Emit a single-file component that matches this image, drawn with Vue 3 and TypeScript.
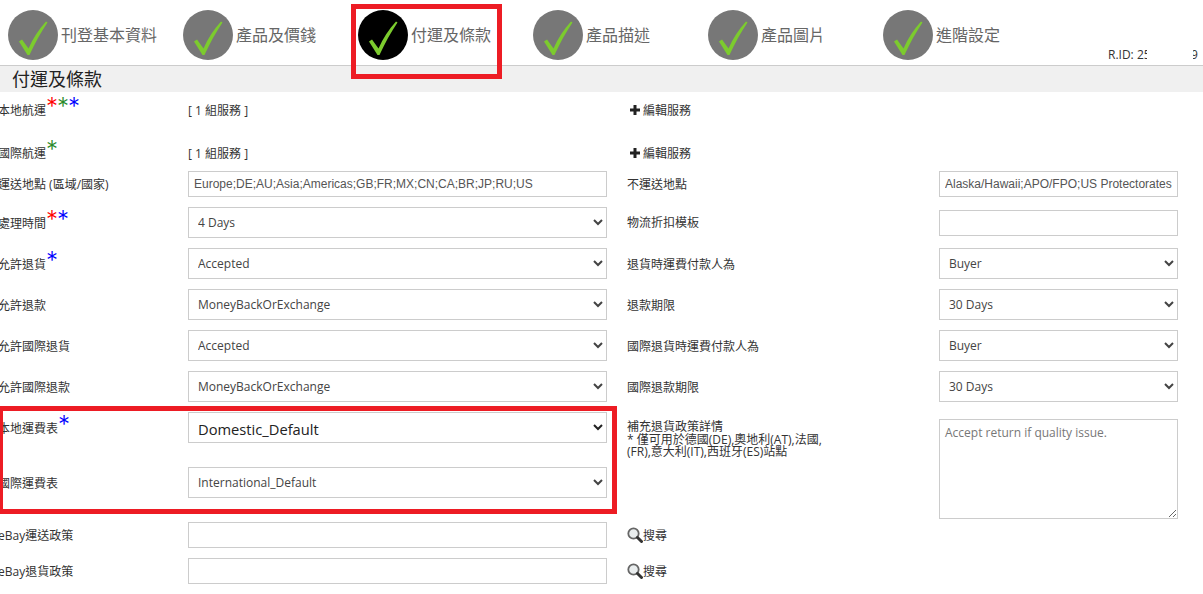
<script setup lang="ts">
interface Step { label: string; active?: boolean }
const steps: Step[] = [
  { label: '刊登基本資料' },
  { label: '產品及價錢' },
  { label: '付運及條款', active: true },
  { label: '產品描述' },
  { label: '產品圖片' },
  { label: '進階設定' },
]
</script>

<template>
  <div class="page">
    <header class="steps">
      <div v-for="s in steps" :key="s.label" class="step">
        <span class="disc" :class="{ on: s.active }">
          <svg viewBox="0 0 50 50" width="50" height="50" aria-hidden="true">
            <path d="M11 31.5 L14 29.500 L20.500 38.500 C25 28 31 19 38 11.500 L39.500 12.500 C33 22 27 33 21.500 45 L19.500 45 Z" fill="#7ccb2e" />
          </svg>
        </span>
        <span class="step-text">{{ s.label }}</span>
      </div>
      <div class="rid"><span class="rid-a">R.ID: 25</span><span class="rid-b">9</span></div>
    </header>

    <h2 class="band">付運及條款</h2>

    <form class="form" @submit.prevent>
      <!-- row 1 -->
      <div class="lab h36">本地航運<i class="st r">*</i><i class="st g">*</i><i class="st b">*</i></div>
      <div class="val h36">[ 1 組服務 ]</div>
      <div class="lab2 h36"><svg class="plus" viewBox="0 0 10 10"><path d="M3.5 0h3v3.5H10v3H6.500V10h-3V6.500H0v-3h3.500z" /></svg>編輯服務</div>
      <div></div>

      <!-- row 2 -->
      <div class="lab h37">國際航運<i class="st g">*</i></div>
      <div class="val h37">[ 1 組服務 ]</div>
      <div class="lab2 h37"><svg class="plus" viewBox="0 0 10 10"><path d="M3.5 0h3v3.5H10v3H6.500V10h-3V6.500H0v-3h3.500z" /></svg>編輯服務</div>
      <div></div>

      <!-- row 3 -->
      <div class="lab h26">運送地點 (區域/國家)</div>
      <input class="inp" value="Europe;DE;AU;Asia;Americas;GB;FR;MX;CN;CA;BR;JP;RU;US" />
      <div class="lab3 h26">不運送地點</div>
      <input class="inp side" value="Alaska/Hawaii;APO/FPO;US Protectorates" />

      <!-- row 4 -->
      <div class="lab h31">處理時間<i class="st r">*</i><i class="st b">*</i></div>
      <select class="sel"><option>4 Days</option></select>
      <div class="lab3 h30">物流折扣模板</div>
      <input class="inp side mt3" />

      <!-- row 5 -->
      <div class="lab h31">允許退貨<i class="st b">*</i></div>
      <select class="sel"><option>Accepted</option></select>
      <div class="lab3 h31">退貨時運費付款人為</div>
      <select class="sel side"><option>Buyer</option></select>

      <!-- row 6 -->
      <div class="lab h31">允許退款</div>
      <select class="sel"><option>MoneyBackOrExchange</option></select>
      <div class="lab3 h31">退款期限</div>
      <select class="sel side"><option>30 Days</option></select>

      <!-- row 7 -->
      <div class="lab h31">允許國際退貨</div>
      <select class="sel"><option>Accepted</option></select>
      <div class="lab3 h31">國際退貨時運費付款人為</div>
      <select class="sel side"><option>Buyer</option></select>

      <!-- row 8 -->
      <div class="lab h31">允許國際退款</div>
      <select class="sel"><option>MoneyBackOrExchange</option></select>
      <div class="lab3 h31">國際退款期限</div>
      <select class="sel side"><option>30 Days</option></select>

      <!-- row 9 -->
      <div class="lab h31">本地運費表<i class="st b">*</i></div>
      <select class="sel big"><option>Domestic_Default</option></select>
      <div class="note">補充退貨政策詳情<br />* 僅可用於德國(DE),奧地利(AT),法國,<br />(FR),意大利(IT),西班牙(ES)站點</div>
      <textarea class="area">Accept return if quality issue.</textarea>

      <!-- row 10 -->
      <div class="lab h31">國際運費表</div>
      <select class="sel"><option>International_Default</option></select>
      <div></div>

      <!-- row 11 -->
      <div class="lab h26">eBay運送政策</div>
      <input class="inp" />
      <div class="lab3 h26"><svg class="mag" viewBox="0 0 16 16"><circle cx="6.500" cy="6.500" r="5.200" fill="#e9edee" stroke="#666" stroke-width="1.800" /><path d="M10.500 10.500 L14.500 14.500" stroke="#333" stroke-width="3" stroke-linecap="round" /></svg>搜尋</div>
      <div></div>

      <!-- row 12 -->
      <div class="lab h26">eBay退貨政策</div>
      <input class="inp" />
      <div class="lab3 h26"><svg class="mag" viewBox="0 0 16 16"><circle cx="6.500" cy="6.500" r="5.200" fill="#e9edee" stroke="#666" stroke-width="1.800" /><path d="M10.500 10.500 L14.500 14.500" stroke="#333" stroke-width="3" stroke-linecap="round" /></svg>搜尋</div>
      <div></div>
    </form>

    <div class="mark mark-step"></div>
    <div class="mark mark-rows"></div>
  </div>
</template>

<style>
html, body { margin: 0; background: #fff; overflow: hidden; }
</style>

<style scoped>
.page {
  position: relative;
  width: 1203px;
  height: 594px;
  overflow: hidden;
  font-family: "Open Sans", "Noto Sans CJK TC", sans-serif;
  font-size: 12px;
  color: #333;
}
.steps {
  position: relative;
  display: flex;
  height: 66px;
  padding: 10px 0 0 8px;
  box-sizing: border-box;
  border-bottom: 1px solid #ccc;
}
.step { display: flex; width: 175px; height: 50px; align-items: center; }
.disc { width: 50px; height: 50px; border-radius: 50%; background: #777; flex: none; margin-right: 3px; }
.disc svg { display: block; }
.disc.on { background: #000; }
.step-text { font-size: 16px; color: #666; margin-top: -3px; }
.rid {
  position: absolute;
  left: 1108px;
  top: 46px;
  width: 90px;
  color: #333;
  font-size: 12px;
  display: flex;
  justify-content: space-between;
}
.rid-a { width: 39px; overflow: hidden; white-space: nowrap; }
.rid-b { width: 5px; overflow: hidden; text-indent: -2px; }
.band {
  margin: 0;
  height: 26px;
  padding-left: 12px;
  background: #f0f0f0;
  font-size: 18px;
  font-weight: 400;
  line-height: 27px;
  color: #222;
}
.form {
  display: grid;
  grid-template-columns: 186px 439px 312px 239px;
  grid-template-rows: 42px 37px 36px 41px 41px 41px 41px 41px 55px 55px 36px 36px;
  align-items: start;
  margin-left: 2px;
}
.lab, .lab2, .lab3, .val { display: flex; align-items: center; white-space: nowrap; color: #333; }
.lab { margin-left: -4px; }
.lab2 { padding-left: 3px; }
.h36 { height: 36px; }
.h37 { height: 38px; }
.h26 { height: 26px; }
.h30 { height: 30px; }
.h31 { height: 31px; }
.st {
  font-style: normal;
  font-family: "Inter", sans-serif;
  font-weight: 300;
  font-size: 24px;
  line-height: 20px;
  width: 11px;
  text-align: center;
  height: 20px;
  margin-top: -6px;
  flex: none;
}
.st.r { color: #f00; }
.st.g { color: #2a8a2a; }
.st.b { color: #00f; }
.inp, .sel, .area {
  box-sizing: border-box;
  border: 1px solid #ccc;
  background: #fff;
  outline: none;
  margin: 0;
}
.inp {
  width: 419px;
  height: 26px;
  padding: 0 5px;
  font-family: "Liberation Sans", sans-serif;
  font-size: 12px;
  color: #555;
}
.sel {
  width: 419px;
  height: 31px;
  padding: 0 0 0 5px;
  font-family: "Open Sans", sans-serif;
  font-size: 12px;
  color: #444;
}
.inp.side, .sel.side { width: 239px; }
.mt3 { margin-top: 3px; }
.sel.big { font-size: 14.7px; color: #222; padding-top: 3px; }
.note {
  line-height: 12.6px;
  padding-top: 9px;
  color: #333;
  white-space: nowrap;
}
.area {
  grid-row: span 2;
  width: 239px;
  height: 100px;
  margin-top: 7px;
  padding: 4px 5px;
  font-family: "Open Sans", sans-serif;
  font-size: 12px;
  color: #777;
  resize: both;
}
.plus { width: 10px; height: 10px; fill: #222; margin-right: 3px; }
.mag { width: 16px; height: 16px; flex: none; }
.mark { position: absolute; box-sizing: border-box; border: 5px solid #ed1c24; pointer-events: none; }
.mark-step { left: 351px; top: 4px; width: 151px; height: 75px; }
.mark-rows { left: -2px; top: 406px; width: 619px; height: 108px; }
</style>
